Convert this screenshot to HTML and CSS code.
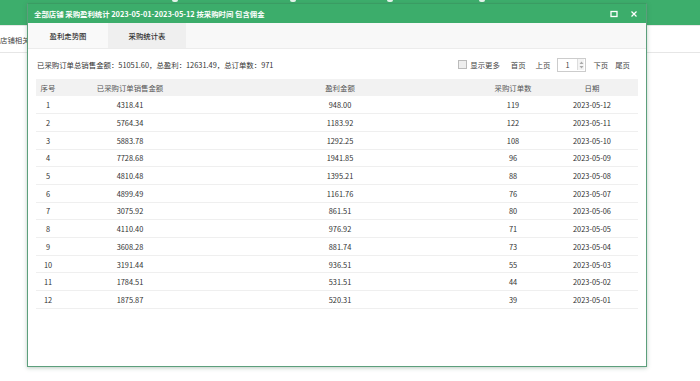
FILE: index.html
```html
<!DOCTYPE html>
<html lang="zh-CN">
<head>
    <meta charset="UTF-8">
    <title>采购盈利统计</title>
    <link rel="stylesheet" href="styles.css">
</head>
<body>
    <div class="page">
        <div class="topbar">
            <span class="mark m1"></span>
            <span class="mark m2"></span>
            <span class="mark m3"></span>
            <span class="mark m4"></span>
        </div>
        <div class="subbar">
            <span class="crumb">店铺相关</span>
        </div>
    </div>

    <div class="modal">
        <div class="modal-head">
            <span class="modal-title">全部店铺 采购盈利统计 2023-05-01-2023-05-12 按采购时间 包含佣金</span>
            <span class="head-tools">
                <svg class="tool" width="8" height="8" viewBox="0 0 8 8"><rect x="1" y="1.5" width="6" height="5" fill="none" stroke="#fff" stroke-width="1.3"/></svg>
                <svg class="tool" width="8" height="8" viewBox="0 0 8 8"><path d="M1.5 1.5 L6.5 6.5 M6.5 1.5 L1.5 6.5" stroke="#fff" stroke-width="1.2"/></svg>
            </span>
        </div>
        <div class="tabs">
            <div class="tab active">盈利走势图</div>
            <div class="tab">采购统计表</div>
        </div>
        <div class="content">
            <div class="summary">
                <span class="totals">已采购订单总销售金额：51051.60，总盈利：12631.49，总订单数：971</span>
                <div class="pager">
                    <label class="more"><span class="check"></span>显示更多</label>
                    <span class="plink first">首页</span>
                    <span class="plink">上页</span>
                    <span class="page-input">
                        <span class="num">1</span>
                        <span class="spin">
                            <svg width="5" height="10" viewBox="0 0 5 10"><path d="M0.5 4 L2.5 1.5 L4.5 4 Z M0.5 6 L2.5 8.5 L4.5 6 Z" fill="#aaa"/></svg>
                        </span>
                    </span>
                    <span class="plink">下页</span>
                    <span class="plink">尾页</span>
                </div>
            </div>
            <table class="grid">
                <thead>
                    <tr>
                        <th class="c1">序号</th>
                        <th class="c2">已采购订单销售金额</th>
                        <th class="c3">盈利金额</th>
                        <th class="c4">采购订单数</th>
                        <th class="c5">日期</th>
                    </tr>
                </thead>
                <tbody>
                    <tr><td>1</td><td>4318.41</td><td>948.00</td><td>119</td><td>2023-05-12</td></tr>
                    <tr><td>2</td><td>5764.34</td><td>1183.92</td><td>122</td><td>2023-05-11</td></tr>
                    <tr><td>3</td><td>5883.78</td><td>1292.25</td><td>108</td><td>2023-05-10</td></tr>
                    <tr><td>4</td><td>7728.68</td><td>1941.85</td><td>96</td><td>2023-05-09</td></tr>
                    <tr><td>5</td><td>4810.48</td><td>1395.21</td><td>88</td><td>2023-05-08</td></tr>
                    <tr><td>6</td><td>4899.49</td><td>1161.76</td><td>76</td><td>2023-05-07</td></tr>
                    <tr><td>7</td><td>3075.92</td><td>861.51</td><td>80</td><td>2023-05-06</td></tr>
                    <tr><td>8</td><td>4110.40</td><td>976.92</td><td>71</td><td>2023-05-05</td></tr>
                    <tr><td>9</td><td>3608.28</td><td>881.74</td><td>73</td><td>2023-05-04</td></tr>
                    <tr><td>10</td><td>3191.44</td><td>936.51</td><td>55</td><td>2023-05-03</td></tr>
                    <tr><td>11</td><td>1784.51</td><td>531.51</td><td>44</td><td>2023-05-02</td></tr>
                    <tr><td>12</td><td>1875.87</td><td>520.31</td><td>39</td><td>2023-05-01</td></tr>
                </tbody>
            </table>
        </div>
    </div>
</body>
</html>
```

FILE: styles.css
```css
body {
    margin: 0;
    width: 700px;
    height: 381px;
    overflow: hidden;
    background-color: #fff;
    font-family: "Noto Sans CJK SC", "Noto Sans", sans-serif;
    font-size: 7.4px;
    color: #333;
    position: relative;
}

/* 背景页面 */
.topbar {
    height: 25px;
    background-color: #3dae6c;
    display: flex;
    align-items: flex-start;
}

.mark {
    width: 6px;
    height: 2px;
    background-color: #e8f6ee;
    border-radius: 0 0 3px 3px;
}

.m1 { margin-left: 172px; }
.m2 { margin-left: 112px; }
.m3 { margin-left: 91px; }
.m4 { margin-left: 86px; }

.subbar {
    height: 26px;
    border-top: 1px solid #e8e8e8;
    border-bottom: 1px solid #e6e6e6;
    display: flex;
    align-items: center;
}

.crumb {
    color: #444;
}

/* 弹窗 */
.modal {
    position: absolute;
    left: 27px;
    top: 3px;
    width: 618px;
    height: 362px;
    background-color: #fff;
    border: 1px solid #5c9f7c;
    border-top-color: #3a9c63;
    box-shadow: 0 1px 4px rgba(60, 110, 80, 0.35);
    display: flex;
    flex-direction: column;
}

.modal-head {
    height: 19px;
    background-color: #3cad6b;
    display: flex;
    align-items: center;
    justify-content: space-between;
    padding: 0 8px 0 6px;
    flex-shrink: 0;
}

.modal-title {
    color: #fff;
    font-weight: bold;
    font-size: 7.4px;
}

.head-tools {
    display: flex;
    gap: 12px;
    align-items: center;
}

.tool {
    display: block;
}

.tabs {
    height: 25px;
    background-color: #f8f8f8;
    border-bottom: 1px solid #ececec;
    display: flex;
    flex-shrink: 0;
}

.tab {
    display: flex;
    align-items: center;
    justify-content: center;
    color: #333;
    font-weight: 500;
}

.tab.active {
    background-color: #f9f9f9;
    width: 80px;
}

.tab + .tab {
    background-color: #efefef;
    width: 78px;
}

.content {
    padding: 0 8px;
}

.summary {
    height: 29px;
    display: flex;
    align-items: center;
    justify-content: space-between;
    padding-left: 1px;
    margin-top: 1px;
}

.pager {
    display: flex;
    align-items: center;
    margin-right: 8px;
    color: #444;
}

.more {
    display: flex;
    align-items: center;
    margin-right: 11px;
}

.check {
    width: 7px;
    height: 7px;
    border: 1px solid #bbb;
    background-color: #eee;
    margin-right: 3px;
}

.plink {
    margin-right: 7px;
}

.plink.first {
    margin-right: 10px;
}

.plink:last-child {
    margin-right: 0;
}

.page-input {
    width: 29px;
    height: 14px;
    border: 1px solid #ccc;
    display: flex;
    align-items: center;
    justify-content: space-between;
    padding-left: 7px;
    padding-right: 1px;
    box-sizing: border-box;
    margin-right: 7px;
}

.spin {
    width: 6px;
    height: 11px;
    border-left: 1px solid #ddd;
    background-color: #f4f4f4;
    display: flex;
    align-items: center;
    justify-content: center;
}

.grid {
    width: 602px;
    border-collapse: collapse;
    table-layout: fixed;
}

.grid th {
    height: 17px;
    padding: 0;
    background-color: #f2f2f2;
    font-weight: normal;
    color: #555;
    text-align: center;
}

.grid td {
    height: 17.7px;
    padding: 0;
    text-align: center;
    border-bottom: 1px solid #efefef;
    box-sizing: border-box;
}

.c1 { width: 24px; }
.c2 { width: 140px; }
.c3 { width: 280px; }
.c4 { width: 66px; }
.c5 { width: 92px; }
```
